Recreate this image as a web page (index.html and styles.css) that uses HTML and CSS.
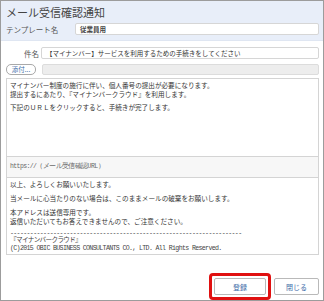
FILE: index.html
```html
<!DOCTYPE html>
<html lang="ja">
<head>
  <meta charset="UTF-8" />
  <meta name="viewport" content="width=device-width, initial-scale=1" />
  <title>メール受信確認通知</title>
  <link rel="stylesheet" href="styles.css">
</head>
<body>

  <div class="dialog">
    <header class="head">
      <h1 class="title">メール受信確認通知</h1>
      <div class="row">
        <label class="lbl tpl-lbl">テンプレート名</label>
        <div class="field tpl">従業員用</div>
      </div>
    </header>

    <main class="main">
      <div class="row subj">
        <label class="lbl subj-lbl">件名</label>
        <div class="field">【マイナンバー】サービスを利用するための手続きをしてください</div>
      </div>

      <div class="row attach-row">
        <button class="attach">添付...</button>
        <div class="field bar"></div>
      </div>

      <div class="mailbody">
        <div class="sec sec-top">
          <p>マイナンバー制度の施行に伴い、個人番号の提出が必要になります。<br>提出するにあたり、『マイナンバークラウド』を利用します。</p>
          <p>下記のＵＲＬをクリックすると、手続きが完了します。</p>
        </div>
        <div class="sec sec-url">https://（メール受信確認URL）</div>
        <div class="sec sec-bottom">
          <p>以上、よろしくお願いいたします。</p>
          <p>当メールに心当たりのない場合は、このままメールの破棄をお願いします。</p>
          <p>本アドレスは送信専用です。<br>返信いただいてもお答えできませんので、ご注意ください。</p>
          <p class="mono">----------------------------------------------------------------------<br>『マイナンバークラウド』<br>(C)2015 OBIC BUSINESS CONSULTANTS CO., LTD. All Rights Reserved.</p>
        </div>
      </div>

      <div class="actions">
        <span class="highlight"><button class="btn">登録</button></span>
        <button class="btn">閉じる</button>
      </div>
    </main>
  </div>

</body>
</html>
```

FILE: styles.css
```css
* {
  box-sizing: border-box;
  margin: 0;
  padding: 0;
}

body {
  font-family: "Noto Sans CJK JP", "Noto Sans", sans-serif;
  color: #333;
  background: #fff;
}

.dialog {
  width: 324px;
  height: 301px;
  border: 1px solid #9c9c9c;
  display: flex;
  flex-direction: column;
}

.head {
  background: #e8eef9;
  height: 40px;
  padding: 3px 4px 0 5px;
  border-bottom: 1px solid #dfe6f2;
}

.title {
  font-size: 11px;
  font-weight: 400;
  line-height: 16px;
  color: #444;
}

.row {
  display: flex;
  align-items: center;
}

.head .row {
  margin-top: 3px;
}

.lbl {
  font-size: 7.5px;
  color: #555;
}

.tpl-lbl {
  width: 69px;
}

.field {
  flex: 1;
  height: 12px;
  background: #fff;
  border: 1px solid #d6d6d6;
  border-radius: 2px;
  font-size: 6.5px;
  line-height: 10px;
  padding-left: 4px;
  color: #333;
  white-space: nowrap;
  overflow: hidden;
}

.tpl {
  font-weight: 700;
  color: #444;
}

.main {
  flex: 1;
  padding: 6px 4px 0 4px;
  display: flex;
  flex-direction: column;
}

.subj-lbl {
  width: 36px;
  text-align: right;
  padding-right: 2px;
}

.attach-row {
  margin-top: 5px;
  gap: 6px;
}

.attach {
  width: 30px;
  height: 11px;
  margin-left: 1px;
  border: 1px solid #a9a9a9;
  border-radius: 5px;
  background: #fff;
  font-family: inherit;
  font-size: 6.5px;
  line-height: 9px;
  color: #3d6ca8;
}

.bar {
  height: 11px;
  background: #ededed;
  border-color: #dcdcdc;
}

.mailbody {
  margin-top: 3px;
  margin-left: 1px;
  height: 177px;
  border: 1px solid #d4d4d4;
  display: flex;
  flex-direction: column;
  font-size: 6.6px;
  line-height: 9px;
  color: #333;
}

.sec {
  padding: 2px 3px;
}

.sec-top p + p {
  margin-top: 4px;
}

.sec-bottom p + p {
  margin-top: 5px;
}

.sec-top {
  height: 82px;
  border-bottom: 1px solid #d4d4d4;
}

.sec-url {
  height: 21px;
  background: #f7f7f7;
  border-bottom: 1px solid #d4d4d4;
  font-family: "Liberation Mono", monospace;
  font-size: 6.5px;
  letter-spacing: -0.6px;
  color: #666;
  padding-top: 5px;
}

.sec-bottom {
  flex: 1;
}

.sec-bottom .mono {
  margin-top: 4px;
  font-family: "Liberation Mono", "Noto Sans CJK JP", monospace;
  line-height: 7.5px;
  letter-spacing: -0.65px;
  color: #444;
}

.actions {
  display: flex;
  justify-content: flex-end;
  align-items: center;
  gap: 3px;
  margin-top: 18px;
}

.highlight {
  display: inline-flex;
  padding: 2px;
  border: 3px solid #e01010;
  border-radius: 4px;
}

.btn {
  height: 17px;
  background: #fff;
  border: 1px solid #b9b9b9;
  border-radius: 2px;
  font-family: inherit;
  font-size: 7px;
  color: #3d6ca8;
}

.highlight .btn {
  width: 52px;
}

.actions > .btn {
  width: 45px;
}
```
